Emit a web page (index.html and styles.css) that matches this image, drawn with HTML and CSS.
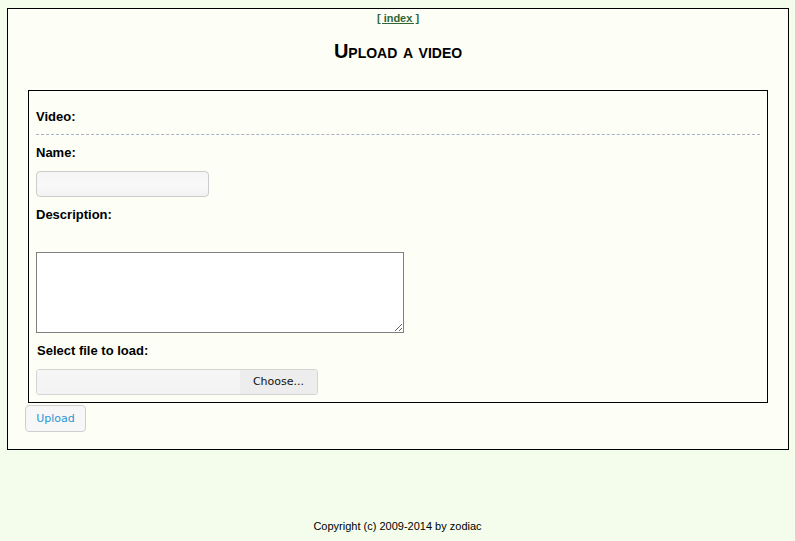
FILE: index.html
```html
<!DOCTYPE html>
<html>
<head>
<meta charset="utf-8">
<link rel="stylesheet" href="styles.css">
</head>
<body>
<div class="page">
  <div class="nav"><a href="#">[&nbsp;index&nbsp;]</a></div>
  <h1 class="title">Upload a video</h1>
  <form class="form">
    <div class="box">
      <div class="label">Video:</div>
      <div class="sep"></div>
      <div class="label">Name:</div>
      <div class="text-input"></div>
      <div class="label">Description:</div>
      <textarea class="area"></textarea>
      <div class="label label-file">Select file to load:</div>
      <div class="file">
        <span class="file-name"></span>
        <span class="file-btn">Choose...</span>
      </div>
    </div>
    <button type="button" class="upload">Upload</button>
  </form>
</div>
<div class="footer">Copyright (c) 2009-2014 by zodiac</div>
</body>
</html>
```
FILE: styles.css
```css
html, body {
  margin: 0;
  padding: 0;
  background: #f4fdec;
  font-family: "Liberation Sans", Arial, sans-serif;
  color: #000;
}
.page {
  margin: 8px 6px 0 7px;
  border: 1px solid #000;
  background: #fdfff7;
  padding: 2px 0 17px;
}
.nav {
  text-align: center;
  font-size: 11px;
  font-weight: bold;
  line-height: 14px;
}
.nav a {
  color: #336633;
  text-decoration: underline;
}
.title {
  margin: 0;
  padding-top: 14px;
  text-align: center;
  font-size: 20px;
  font-variant: small-caps;
  font-weight: bold;
  line-height: 24px;
}
.form {
  margin: 0;
  padding-top: 27px;
}
.box {
  margin: 0 20px;
  border: 1px solid #000;
  padding: 18px 7px 7px;
}
.label {
  font-size: 13px;
  font-weight: bold;
  line-height: 16px;
  margin-top: 10px;
}
.box .label:first-child {
  margin-top: 0;
}
.label-file {
  margin-left: 1px;
}
.sep {
  margin-top: 9px;
  border-top: 1px dashed #a9b0c9;
}
.text-input {
  margin-top: 10px;
  width: 171px;
  height: 24px;
  border: 1px solid #cccccc;
  border-radius: 4px;
  background: linear-gradient(#f5f5f6, #f8f8f8 60%, #f2f2f2);
}
.area {
  display: block;
  margin: 29px 0 0;
  width: 368px;
  height: 81px;
  box-sizing: border-box;
  border: 1px solid #808080;
  background: #fff;
  padding: 0;
}
.file {
  margin-top: 10px;
  width: 280px;
  height: 24px;
  display: flex;
  border: 1px solid #d4d4d4;
  border-radius: 3px;
  overflow: hidden;
}
.file-name {
  flex: 1;
  background: linear-gradient(#f6f6f6, #f3f3f3);
}
.file-btn {
  width: 77px;
  background: #ededed;
  font-family: "DejaVu Sans", Verdana, sans-serif;
  font-size: 11px;
  line-height: 24px;
  text-align: center;
  color: #111;
}
.upload {
  display: block;
  margin: 2px 0 0 17px;
  width: 61px;
  height: 27px;
  border: 1px solid #cfcfcf;
  border-radius: 4px;
  background: #f7f7f7;
  color: #2a95d2;
  font-family: "DejaVu Sans", Verdana, sans-serif;
  font-size: 11px;
  padding: 0;
}
.footer {
  margin-top: 69px;
  text-align: center;
  font-size: 11px;
  line-height: 14px;
}
```
